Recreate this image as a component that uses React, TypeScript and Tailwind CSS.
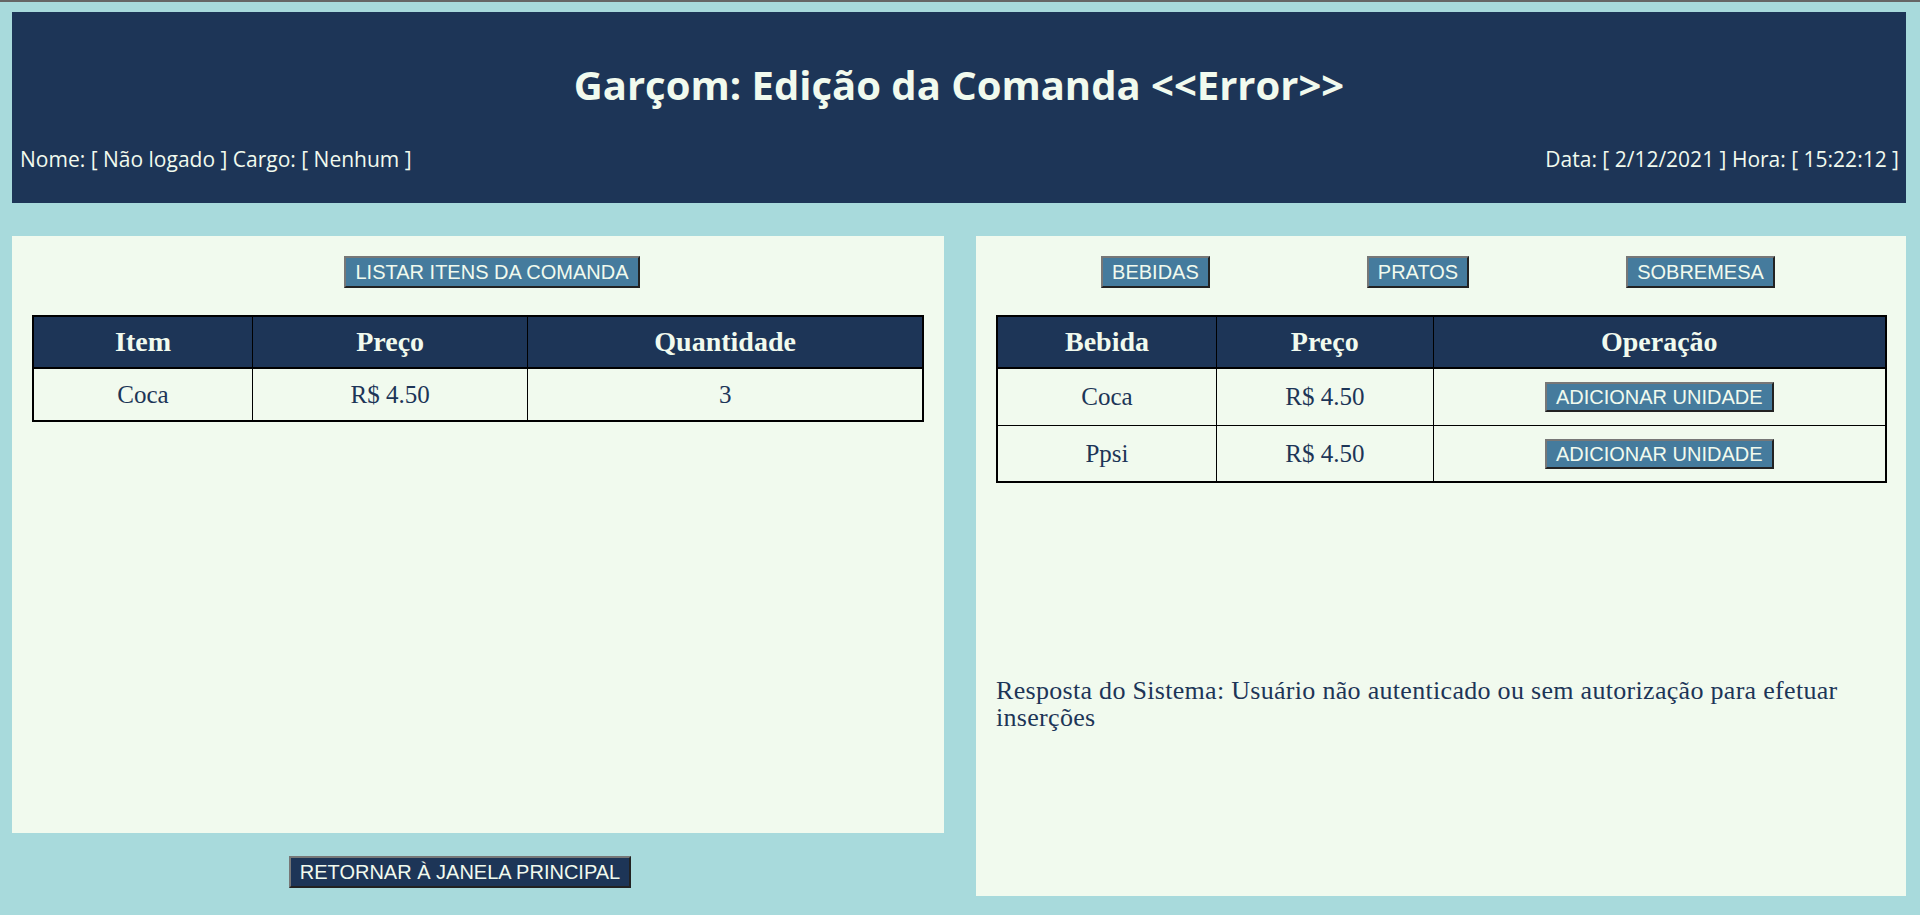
const btn =
  "h-[32px] px-[9px] bg-[#457b9d] text-[#f1faee] text-[20px] leading-[28px] border-2 border-t-[#777] border-l-[#777] border-b-[#222] border-r-[#222] whitespace-nowrap";
const serif = { fontFamily: '"Liberation Serif", serif' };
const th = "bg-[#1d3557] text-[#f1faee] font-bold text-[28px] border border-black border-b-2 h-[52px]";
const td = "text-[#1d3557] text-[25px] border border-black text-center";

const comanda = [{ item: "Coca", preco: "R$ 4.50", qtd: 3 }];
const bebidas = [
  { nome: "Coca", preco: "R$ 4.50" },
  { nome: "Ppsi", preco: "R$ 4.50" },
];

export default function App() {
  return (
    <div
      className="h-[915px] overflow-hidden bg-[#a8dadc] border-t-2 border-[#666] pt-[10px] pl-[12px] pr-[14px]"
      style={{ fontFamily: '"Liberation Sans", Arial, sans-serif' }}
    >
      {/* cabeçalho */}
      <header
        className="h-[191px] bg-[#1d3557] text-[#f1faee]"
        style={{ fontFamily: '"Open Sans", sans-serif' }}
      >
        <h1 className="pt-[48px] text-[40px] leading-[50px] font-bold text-center">
          Garçom: Edição da Comanda &lt;&lt;Error&gt;&gt;
        </h1>
        <div className="mt-[35px] flex justify-between pl-[8px] pr-[7px] text-[21px] leading-[28px]">
          <span>Nome: [ Não logado ] Cargo: [ Nenhum ]</span>
          <span>Data: [ 2/12/2021 ] Hora: [ 15:22:12 ]</span>
        </div>
      </header>

      <div className="mt-[33px] flex gap-[32px]">
        {/* comanda */}
        <div className="w-[932px] flex flex-col">
          <section className="h-[597px] bg-[#f1faee] pt-[20px]">
            <div className="flex justify-center pl-[28px]">
              <button className={btn}>LISTAR ITENS DA COMANDA</button>
            </div>
            <table className="mt-[27px] mx-[20px] w-[892px] border-collapse border-2 border-black" style={serif}>
              <colgroup>
                <col className="w-[220px]" />
                <col className="w-[276px]" />
                <col className="w-[396px]" />
              </colgroup>
              <thead>
                <tr>
                  <th className={th}>Item</th>
                  <th className={th}>Preço</th>
                  <th className={th}>Quantidade</th>
                </tr>
              </thead>
              <tbody>
                {comanda.map((c) => (
                  <tr key={c.item} className="h-[53px]">
                    <td className={td}>{c.item}</td>
                    <td className={td}>{c.preco}</td>
                    <td className={td}>{c.qtd}</td>
                  </tr>
                ))}
              </tbody>
            </table>
          </section>
          <div className="mt-[23px] flex justify-center pr-[36px]">
            <button className={btn.replace("bg-[#457b9d]", "bg-[#1d3557]")}>RETORNAR À JANELA PRINCIPAL</button>
          </div>
        </div>

        {/* cardápio */}
        <section className="flex-1 h-[660px] bg-[#f1faee] pt-[20px]">
          <div className="flex justify-center gap-[157px] pr-[6px]">
            <button className={btn}>BEBIDAS</button>
            <button className={btn}>PRATOS</button>
            <button className={btn}>SOBREMESA</button>
          </div>
          <table className="mt-[27px] ml-[20px] w-[891px] border-collapse border-2 border-black" style={serif}>
            <colgroup>
              <col className="w-[220px]" />
              <col className="w-[217px]" />
              <col className="w-[454px]" />
            </colgroup>
            <thead>
              <tr>
                <th className={th}>Bebida</th>
                <th className={th}>Preço</th>
                <th className={th}>Operação</th>
              </tr>
            </thead>
            <tbody>
              {bebidas.map((b) => (
                <tr key={b.nome} className="h-[57px]">
                  <td className={td}>{b.nome}</td>
                  <td className={td}>{b.preco}</td>
                  <td className={td}>
                    <button
                      className="h-[30px] -mt-[4px] px-[9px] bg-[#457b9d] text-[#f1faee] text-[20px] leading-[26px] border-2 border-t-[#777] border-l-[#777] border-b-[#222] border-r-[#222] align-middle"
                      style={{ fontFamily: '"Liberation Sans", Arial, sans-serif' }}
                    >
                      ADICIONAR UNIDADE
                    </button>
                  </td>
                </tr>
              ))}
            </tbody>
          </table>
          <p
            className="mt-[194px] px-[20px] text-[26px] leading-[27px] tracking-[0.3px] text-[#1d3557]"
            style={serif}
          >
            Resposta do Sistema: Usuário não autenticado ou sem autorização para efetuar inserções
          </p>
        </section>
      </div>
    </div>
  );
}
